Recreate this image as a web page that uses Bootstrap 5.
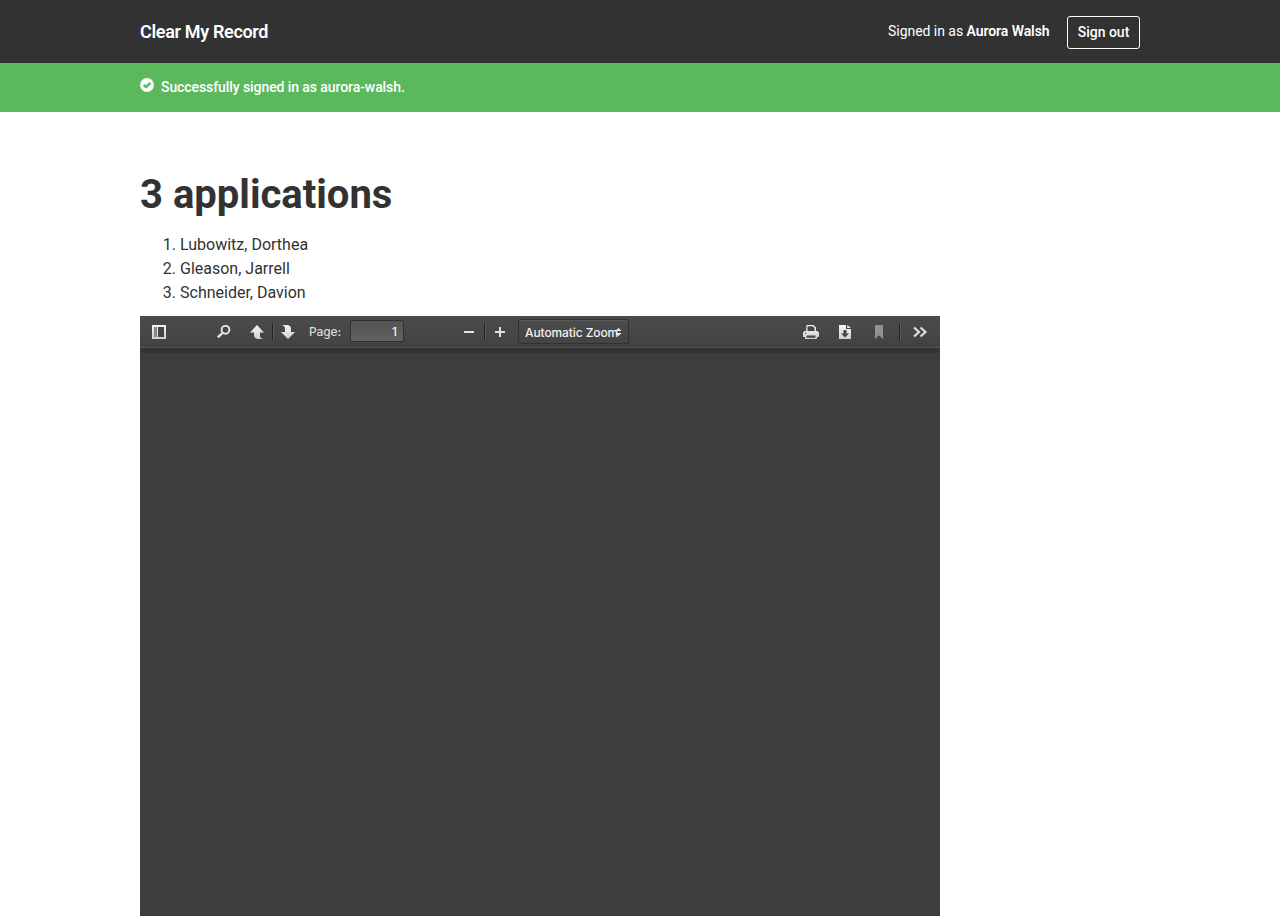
<!DOCTYPE html>
<html lang="en">
<head>
<meta charset="utf-8">
<meta name="viewport" content="width=device-width, initial-scale=1">
<title>Clear My Record</title>
<link href="https://cdn.jsdelivr.net/npm/bootstrap@5.3.0/dist/css/bootstrap.min.css" rel="stylesheet">
<style>
body { font-family: Roboto, "Liberation Sans", sans-serif; color: #323232; background: #fff; }
.page-wrap { width: 1000px; margin: 0 auto; }
.site-header { background: #323232; color: #fff; height: 63px; padding-top: 2px; font-size: 14px; }
.site-name { font-size: 18px; font-weight: 600; color: #fff; letter-spacing: -.33px; margin-top: -3px; }
.btn-signout { width: 73px; height: 33px; border: 1px solid #fff; border-radius: 3px; color: #fff; font-size: 14px; font-weight: 500; line-height: 31px; margin-left: 17.5px; }
.signed-in { margin-top: -2px; letter-spacing: -.04px; }
.signed-in strong { font-weight: 600; letter-spacing: -.08px; }
.flash { background: #5cb85c; color: #fff; height: 49px; font-size: 14px; font-weight: 500; letter-spacing: -.08px; }
.flash svg { margin: 0 7px 5px 0; }
h1 { font-size: 40px; font-weight: 700; line-height: 48px; margin: 59px 0 14px; }
ol { padding-left: 40px; margin-bottom: 11px; line-height: 24px; }
.pdf-viewer { width: 800px; height: 600px; background: #3d3d3d; }
.pdf-toolbar { height: 32px; padding: 0 12px 0 11px; background: linear-gradient(#4b4b4b, #424242); border-bottom: 1px solid #505050; font-family: Inter, sans-serif; font-size: 12px; font-weight: 500; letter-spacing: -.1px; color: #d9d9d9; }
.pdf-toolbar > * { flex: none; }
.pdf-toolbar svg { width: 16px; height: 16px; display: block; fill: url(#shine); }
.loading-bar { height: 5px; background: #333; }
.split-line { width: 1px; height: 17px; background: #222; box-shadow: 1px 0 #5a5a5a; }
.page-field { width: 54px; height: 22px; border: 1px solid #303030; border-radius: 2px; background: linear-gradient(#535353, #616161); padding: 0 6px; text-align: right; line-height: 22px; color: #f2f2f2; margin-left: 9px; margin-top: -2px; }
.zoom-field { width: 111px; height: 25px; border: 1px solid #303030; border-radius: 2px; background: linear-gradient(#4c4c4c, #444); box-shadow: inset 0 1px #585858; color: #f2f2f2; padding: 0 6px; line-height: 25px; font-size: 12px; margin-left: 10px; position: relative; white-space: nowrap; }
.pdf-toolbar .zoom-field svg { position: absolute; right: 6px; top: 8px; width: 7px; height: 8px; fill: #f2f2f2; }
.gap-7 { margin-left: 7px; }
.gap-12 { margin-left: 12px; }
.gap-18 { margin-left: 18px; }
</style>
</head>
<body>
<header class="site-header">
  <div class="page-wrap h-100 d-flex align-items-center">
    <a href="#" class="site-name text-decoration-none">Clear My Record</a>
    <span class="signed-in ms-auto">Signed in as <strong>Aurora Walsh</strong></span>
    <button type="button" class="btn btn-signout p-0">Sign out</button>
  </div>
</header>
<div class="flash">
  <div class="page-wrap h-100 d-flex align-items-center">
    <svg width="14" height="14" viewBox="0 0 14 14" aria-hidden="true"><circle cx="7" cy="7" r="6.9" fill="#fff"/><path d="M3.700 6.800 6.100 9 10.400 4.800" fill="none" stroke="#5cb85c" stroke-width="2.500"/></svg>
    <span>Successfully signed in as aurora-walsh.</span>
  </div>
</div>
<main class="page-wrap">
  <h1>3 applications</h1>
  <ol>
    <li>Lubowitz, Dorthea</li>
    <li>Gleason, Jarrell</li>
    <li>Schneider, Davion</li>
  </ol>
  <div class="pdf-viewer">
    <div class="pdf-toolbar d-flex align-items-center">
      <svg viewBox="0 0 16 16"><defs><linearGradient id="shine" gradientUnits="userSpaceOnUse" x1="0" y1="1" x2="0" y2="15"><stop stop-color="#f5f5f5"/><stop offset="1" stop-color="#cfcfcf"/></linearGradient></defs><path fill-rule="evenodd" d="M1 1h14v14H1zM3 3v10h3V3zM7 3v10h6V3z"/><path fill="#858585" d="M3 3h3v10H3z"/></svg>
      <svg viewBox="0 0 16 16" style="margin-left:49px"><circle cx="9.500" cy="5.800" r="3.900" fill="none" stroke="#e8e8e8" stroke-width="1.900"/><path d="M6.800 8.600 1.800 13.400" stroke="#dcdcdc" stroke-width="2.500"/></svg>
      <svg viewBox="0 0 16 16" style="margin-left:17px"><path d="M8 1 1 8.500h4V11c0 2.500 1.800 4 4.500 4H14c-1.800-.5-3-1.600-3-3V8.500h4z"/></svg>
      <span class="split-line gap-7"></span>
      <svg viewBox="0 0 16 16" class="gap-7"><path d="M8 15 1 8h4V5c0-1.800-.8-3.200-3-4h4.500c3 0 4.500 1.500 4.500 4v3h4z"/></svg>
      <span style="margin-left:13px;width:32px">Page:</span>
      <span class="page-field">1</span>
      <svg viewBox="0 0 16 16" style="margin-left:57px"><path fill="#e2e2e2" d="M3 7h10v2H3z"/></svg>
      <span class="split-line gap-7"></span>
      <svg viewBox="0 0 16 16" class="gap-7"><path fill="#e2e2e2" d="M7 3h2v4h4v2H9v4H7V9H3V7h4z"/></svg>
      <div class="zoom-field">Automatic Zoom<svg viewBox="0 0 7 8"><path d="M3.500 0 6.500 3h-6zM.5 5h6l-3 3z"/></svg></div>
      <svg viewBox="0 0 16 16" class="ms-auto"><path fill-rule="evenodd" d="M3.500 1h7L13 3.500V7h1.500L16 8.500V13h-2v2H2v-2H0V8.500L1.500 7H3zM4.500 2.300V7h7V4l-1.700-1.700zM3.500 11.500v2.200h9v-2.200z"/><path fill="#555" d="M2 8.800h1.300v1.100H2z"/></svg>
      <svg viewBox="0 0 16 16" class="gap-18"><path fill-rule="evenodd" d="M2 1h7v4h5v10H2zM6.500 6v3.500H4L8 13.500l4-4H9.500V6z"/><path d="M10.200 1 14 4h-3.800z"/></svg>
      <svg viewBox="0 0 16 16" class="gap-18"><path fill="#929292" d="M4 1h8v14l-4-3.700L4 15z"/></svg>
      <span class="split-line gap-12"></span>
      <svg viewBox="0 0 16 16" class="gap-12"><path fill="none" stroke="#e0e0e0" stroke-width="2.200" d="M2 3.500 7 8l-5 4.500M8.500 3.500l5 4.500-5 4.500"/></svg>
    </div>
    <div class="loading-bar"></div>
  </div>
</main>
<script src="https://cdn.jsdelivr.net/npm/bootstrap@5.3.0/dist/js/bootstrap.bundle.min.js"></script>
</body>
</html>
